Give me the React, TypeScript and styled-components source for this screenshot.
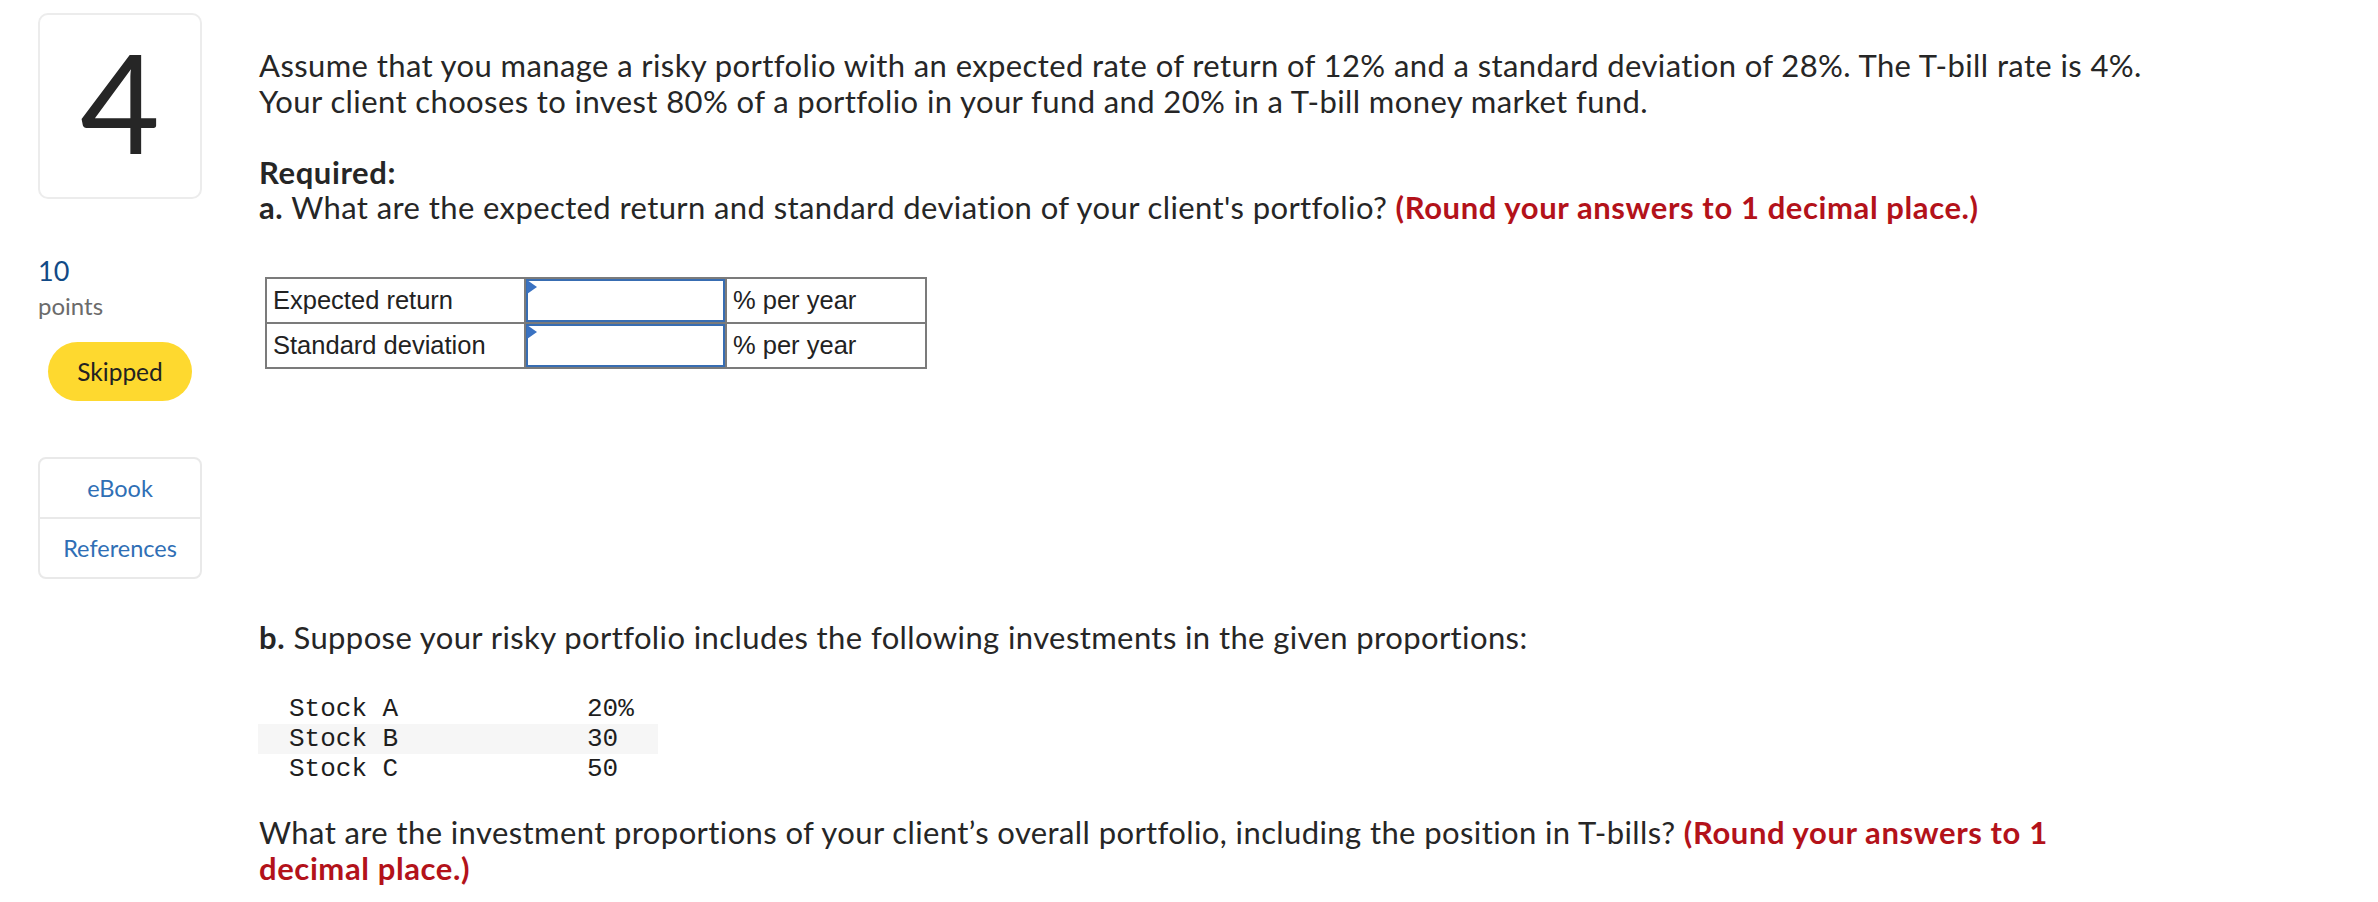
import React from 'react';
import styled, { createGlobalStyle } from 'styled-components';

const GlobalStyle = createGlobalStyle`
    html, body {
        margin: 0;
        padding: 0;
        background: #ffffff;
    }
`;

const Page = styled.div`
    display: flex;
    align-items: flex-start;
    padding: 13px 0 0 38px;
    font-family: Lato, "Noto Sans", sans-serif;
    color: #262626;
`;

const Sidebar = styled.aside`
    display: flex;
    flex-direction: column;
    align-items: flex-start;
    width: 164px;
    flex-shrink: 0;
`;

const NumberBox = styled.div`
    display: flex;
    align-items: center;
    justify-content: center;
    box-sizing: border-box;
    width: 164px;
    height: 186px;
    padding-bottom: 10px;
    border: 2px solid #ececec;
    border-radius: 10px;
    font-size: 138px;
    line-height: 1;
    color: #262626;
`;

const PointsValue = styled.div`
    margin-top: 56px;
    font-size: 27px;
    line-height: 32px;
    color: #124a86;
`;

const PointsLabel = styled.div`
    margin-top: 5px;
    font-size: 24px;
    line-height: 28px;
    color: #6b6b6b;
`;

const StatusPill = styled.div`
    display: flex;
    align-items: center;
    justify-content: center;
    width: 144px;
    height: 59px;
    margin: 22px 0 0 10px;
    border-radius: 30px;
    background: #fed92f;
    font-size: 24.5px;
    color: #222222;
`;

const ResourceList = styled.div`
    display: flex;
    flex-direction: column;
    box-sizing: border-box;
    width: 164px;
    margin-top: 56px;
    border: 2px solid #e9e9e9;
    border-radius: 8px;
`;

const ResourceLink = styled.a`
    display: flex;
    align-items: center;
    justify-content: center;
    height: 58px;
    font-size: 23.5px;
    color: #2f6fb5;
    text-decoration: none;

    & + & {
        border-top: 2px solid #e9e9e9;
    }
`;

const Content = styled.main`
    margin-left: 57px;
    padding-top: 35px;
    font-size: 31px;
    letter-spacing: 0.4px;
`;

const Paragraph = styled.p<{ $gap?: number }>`
    margin: ${(p) => p.$gap ?? 0}px 0 0;
    line-height: 35.5px;
    white-space: nowrap;
`;

const Bold = styled.strong`
    font-weight: 700;
    letter-spacing: 0.6px;
`;

const RedNote = styled.strong`
    font-weight: 700;
    letter-spacing: 0.6px;
    color: #b3121a;
`;

const AnswerTable = styled.table`
    margin: 51px 0 0 6px;
    border-collapse: collapse;
    font-family: "Liberation Sans", Arial, sans-serif;
    font-size: 25.5px;
    letter-spacing: 0;
    color: #222222;
`;

const LabelCell = styled.td<{ $width: number }>`
    width: ${(p) => p.$width}px;
    height: 42px;
    box-sizing: border-box;
    padding: 0 6px;
    border: 2px solid #7b7b7b;
`;

const InputCell = styled.td`
    width: 199px;
    height: 42px;
    padding: 0;
    border: 2px solid #7b7b7b;
`;

const InputWrap = styled.div`
    position: relative;
    height: 43px;
`;

const AnswerInput = styled.input`
    display: block;
    box-sizing: border-box;
    width: 100%;
    height: 100%;
    margin: 0;
    border: 2px solid #386db2;
    outline: none;
    background: #ffffff;
    font: inherit;
`;

const InputFlag = styled.span`
    position: absolute;
    top: 1px;
    left: 1px;
    width: 0;
    height: 0;
    border-top: 7px solid transparent;
    border-bottom: 7px solid transparent;
    border-left: 10px solid #3a72c2;
`;

const StockTable = styled.div`
    display: flex;
    flex-direction: column;
    width: 400px;
    margin: 39px 0 0 -1px;
    font-family: "Liberation Mono", "Courier New", monospace;
    font-size: 26px;
    letter-spacing: 0;
    color: #1e1e1e;
`;

const StockRow = styled.div<{ $shaded?: boolean }>`
    display: grid;
    grid-template-columns: 329px 1fr;
    height: 30px;
    line-height: 30px;
    background: ${(p) => (p.$shaded ? '#f6f6f6' : 'transparent')};
`;

const StockName = styled.span`
    padding-left: 31px;
`;

const StockWeight = styled.span``;

const answers = [
    { label: 'Expected return', unit: '% per year' },
    { label: 'Standard deviation', unit: '% per year' },
];

const stocks = [
    { name: 'Stock A', weight: '20%' },
    { name: 'Stock B', weight: '30' },
    { name: 'Stock C', weight: '50' },
];

export default function App() {
    return (
        <>
            <GlobalStyle />
            <Page>
                <Sidebar>
                    <NumberBox>4</NumberBox>
                    <PointsValue>10</PointsValue>
                    <PointsLabel>points</PointsLabel>
                    <StatusPill>Skipped</StatusPill>
                    <ResourceList>
                        <ResourceLink href="#">eBook</ResourceLink>
                        <ResourceLink href="#">References</ResourceLink>
                    </ResourceList>
                </Sidebar>

                <Content>
                    <Paragraph>
                        Assume that you manage a risky portfolio with an expected rate of return of 12% and a standard deviation of 28%. The T-bill rate is 4%.
                        <br />
                        Your client chooses to invest 80% of a portfolio in your fund and 20% in a T-bill money market fund.
                    </Paragraph>

                    <Paragraph $gap={35.5}>
                        <Bold>Required:</Bold>
                        <br />
                        <Bold>a.</Bold> What are the expected return and standard deviation of your client&apos;s portfolio?{' '}
                        <RedNote>(Round your answers to 1 decimal place.)</RedNote>
                    </Paragraph>

                    <AnswerTable>
                        <tbody>
                            {answers.map((row) => (
                                <tr key={row.label}>
                                    <LabelCell $width={259}>{row.label}</LabelCell>
                                    <InputCell>
                                        <InputWrap>
                                            <AnswerInput type="text" aria-label={row.label} />
                                            <InputFlag />
                                        </InputWrap>
                                    </InputCell>
                                    <LabelCell $width={200}>{row.unit}</LabelCell>
                                </tr>
                            ))}
                        </tbody>
                    </AnswerTable>

                    <Paragraph $gap={251}>
                        <Bold>b.</Bold> Suppose your risky portfolio includes the following investments in the given proportions:
                    </Paragraph>

                    <StockTable>
                        {stocks.map((stock, i) => (
                            <StockRow key={stock.name} $shaded={i === 1}>
                                <StockName>{stock.name}</StockName>
                                <StockWeight>{stock.weight}</StockWeight>
                            </StockRow>
                        ))}
                    </StockTable>

                    <Paragraph $gap={31}>
                        What are the investment proportions of your client&rsquo;s overall portfolio, including the position in T-bills?{' '}
                        <RedNote>(Round your answers to 1</RedNote>
                        <br />
                        <RedNote>decimal place.)</RedNote>
                    </Paragraph>
                </Content>
            </Page>
        </>
    );
}
